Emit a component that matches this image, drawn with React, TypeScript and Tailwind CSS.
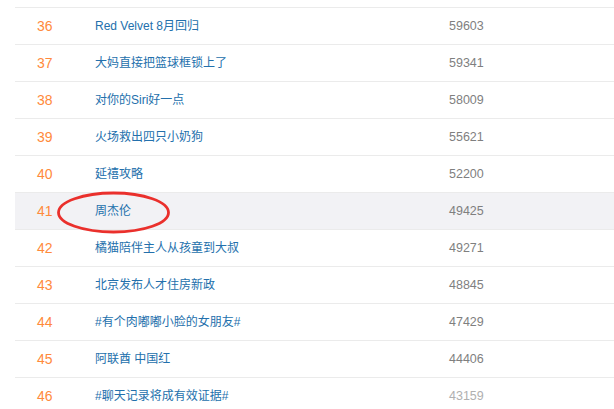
import React from "react";

const rows: { rank: number; title: string; count: string; hl?: boolean; faint?: boolean }[] = [
  { rank: 36, title: "Red Velvet 8月回归", count: "59603" },
  { rank: 37, title: "大妈直接把篮球框锁上了", count: "59341" },
  { rank: 38, title: "对你的Siri好一点", count: "58009" },
  { rank: 39, title: "火场救出四只小奶狗", count: "55621" },
  { rank: 40, title: "延禧攻略", count: "52200" },
  { rank: 41, title: "周杰伦", count: "49425", hl: true },
  { rank: 42, title: "橘猫陪伴主人从孩童到大叔", count: "49271" },
  { rank: 43, title: "北京发布人才住房新政", count: "48845" },
  { rank: 44, title: "#有个肉嘟嘟小脸的女朋友#", count: "47429" },
  { rank: 45, title: "阿联酋 中国红", count: "44406" },
  { rank: 46, title: "#聊天记录将成有效证据#", count: "43159", faint: true },
];

export default function App() {
  return (
    <div
      className="relative w-[614px] h-[409px] overflow-hidden bg-white"
      style={{ fontFamily: '"Liberation Sans", Arial, "Noto Sans CJK SC", sans-serif' }}
    >
      <div className="pl-[15px]">
        <div className="h-[8px] border-b border-[#ebebeb]" />
        {rows.map((r) => (
          <div
            key={r.rank}
            className={`flex items-center h-[37px] border-b border-[#ebebeb] ${r.hl ? "bg-[#f2f2f5]" : ""}`}
          >
            <div className="w-[80px] pl-[22px] text-[14px] text-[#ff8a3c]">{r.rank}</div>
            <div className="w-[354px] text-[12px] text-[#2370ac]">{r.title}</div>
            <div className={`text-[12.5px] ${r.faint ? "text-[#b0b0b0]" : "text-[#7f7f7f]"}`}>{r.count}</div>
          </div>
        ))}
      </div>
      <svg className="absolute left-0 top-0" width="614" height="409">
        <ellipse cx="113.5" cy="212.5" rx="55" ry="19.5" fill="none" stroke="#ea302c" strokeWidth="2.8" />
      </svg>
    </div>
  );
}
